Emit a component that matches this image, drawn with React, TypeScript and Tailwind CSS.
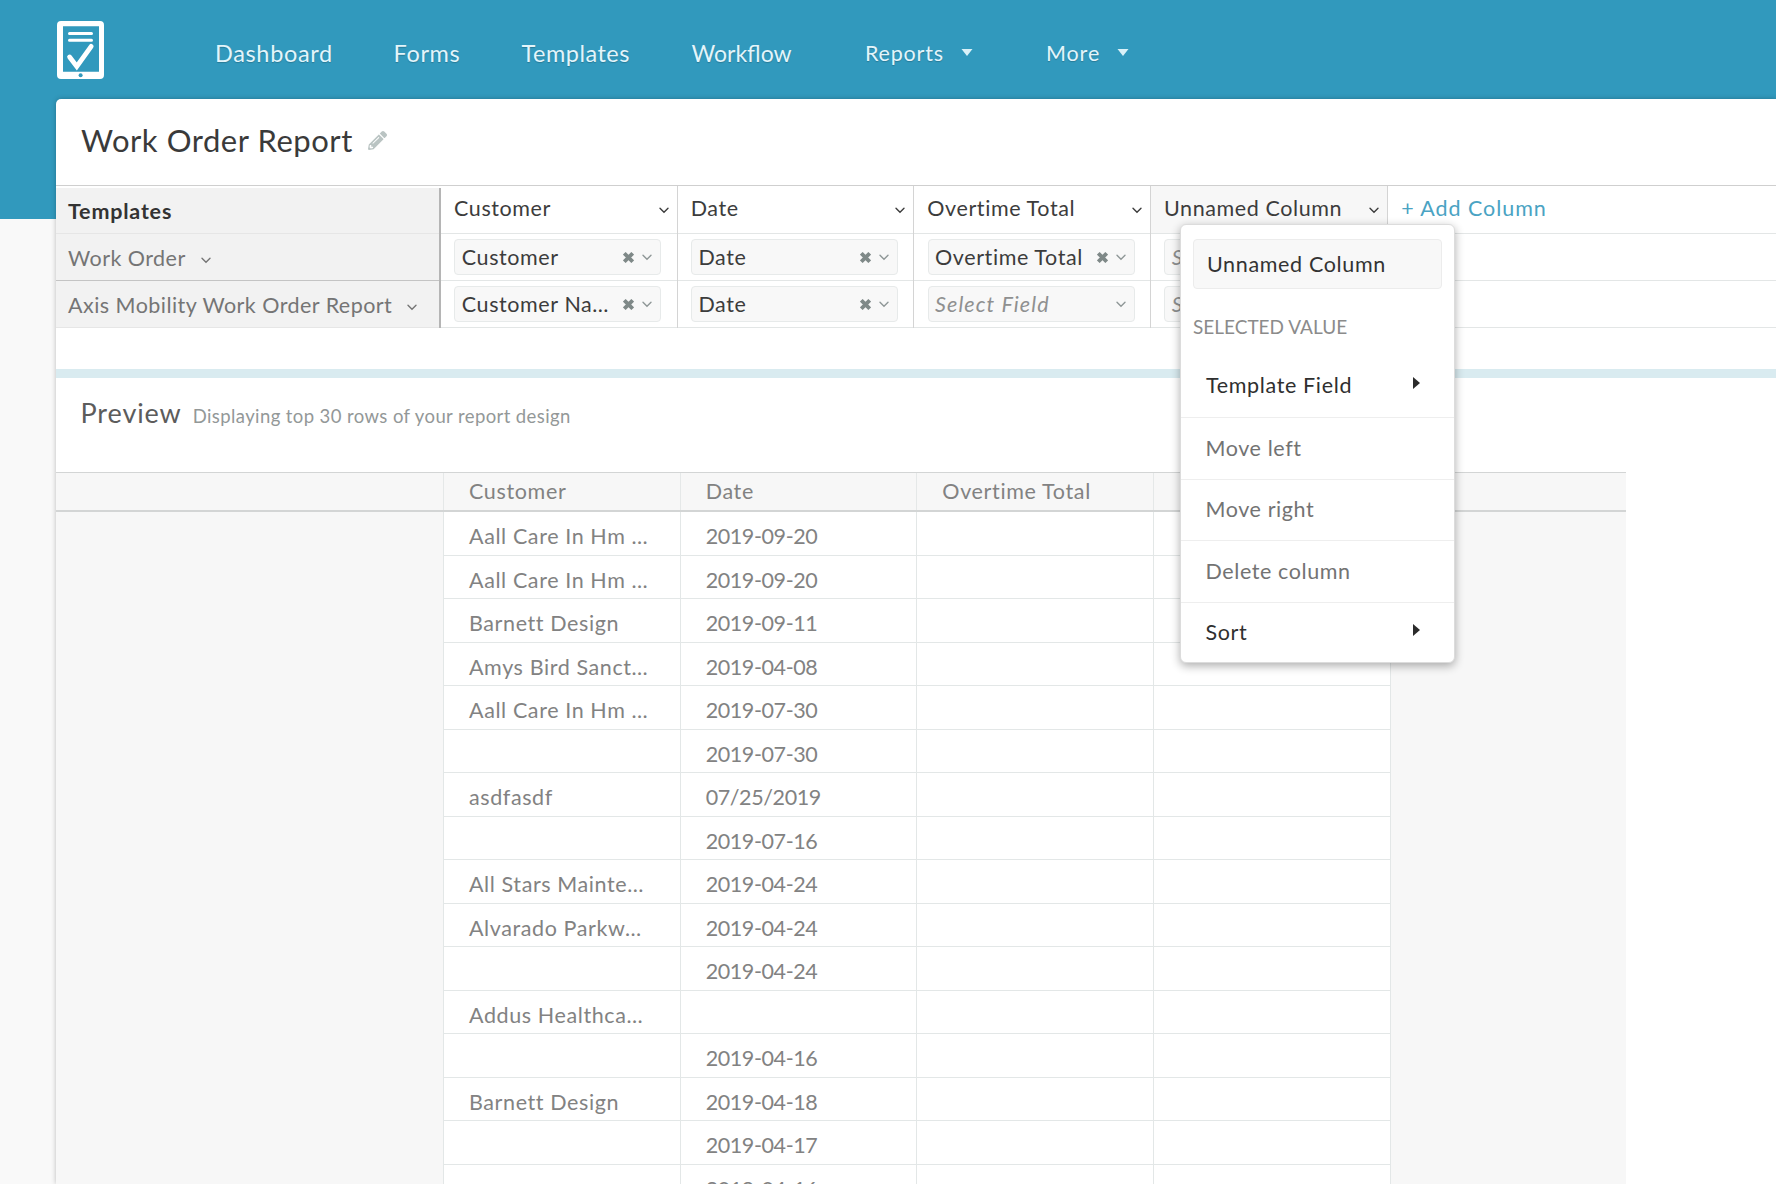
import clsx from "clsx";
import { FaPencilAlt } from "react-icons/fa";

type NavItem = { label: string; className: string; dropdown?: boolean };

const navItems: NavItem[] = [
  { label: "Dashboard", className: "w-[178.5px] text-[23.5px] tracking-[0.65px]" },
  { label: "Forms", className: "w-[128px] text-[23.5px] tracking-[0.65px]" },
  { label: "Templates", className: "w-[170px] text-[23.5px] tracking-[0.5px]" },
  { label: "Workflow", className: "w-[173.5px] text-[23px]" },
  {
    label: "Reports",
    className: "w-[181px] gap-[17px] text-[21.5px] tracking-[0.8px]",
    dropdown: true,
  },
  {
    label: "More",
    className: "gap-[17px] text-[21.5px] tracking-[0.9px]",
    dropdown: true,
  },
];

const templates = [
  { name: "Work Order", border: "h-[47px] border-[#c4c4c4]" },
  { name: "Axis Mobility Work Order Report", border: "h-[47px] border-[#e6e6e6]" },
];

const columns = [
  { name: "Customer", fields: ["Customer", "Customer Na…"] },
  { name: "Date", fields: ["Date", "Date"] },
  { name: "Overtime Total", fields: ["Overtime Total", ""] },
  { name: "Unnamed Column", fields: ["", ""], open: true },
];

const previewRows = [
  ["Aall Care In Hm …", "2019-09-20"],
  ["Aall Care In Hm …", "2019-09-20"],
  ["Barnett Design", "2019-09-11"],
  ["Amys Bird Sanct…", "2019-04-08"],
  ["Aall Care In Hm …", "2019-07-30"],
  ["", "2019-07-30"],
  ["asdfasdf", "07/25/2019"],
  ["", "2019-07-16"],
  ["All Stars Mainte…", "2019-04-24"],
  ["Alvarado Parkw…", "2019-04-24"],
  ["", "2019-04-24"],
  ["Addus Healthca…", ""],
  ["", "2019-04-16"],
  ["Barnett Design", "2019-04-18"],
  ["", "2019-04-17"],
  ["", "2019-04-16"],
];

const Logo = () => (
  <svg width="47" height="58" viewBox="0 0 47 58" fill="none">
    <path
      fill="#fff"
      fillRule="evenodd"
      d="M4 0h39a4 4 0 0 1 4 4v50a4 4 0 0 1-4 4H4a4 4 0 0 1-4-4V4a4 4 0 0 1 4-4ZM6 5.3v45.4h36V5.3Z"
    />
    <path
      d="M12.5 12.6h22M12.5 19.3h22"
      stroke="#fff"
      strokeWidth="3"
      strokeLinecap="round"
    />
    <path
      d="m12.6 36 7.2 9.4 14.4-20"
      stroke="#fff"
      strokeWidth="4.8"
      strokeLinecap="round"
    />
    <circle cx="23.6" cy="54.3" r="2" fill="#3199bd" />
  </svg>
);

const Caret = () => (
  <svg width="12" height="7" viewBox="0 0 12 7" fill="#d9f1f8">
    <path d="M.5 0h11L6 7Z" />
  </svg>
);

const Chevron = ({ className }: { className?: string }) => (
  <svg
    width="10"
    height="7"
    viewBox="0 0 10 7"
    fill="none"
    stroke="currentColor"
    strokeWidth="1.4"
    className={clsx("shrink-0", className)}
  >
    <path d="m1 1.2 4 4 4-4" strokeLinecap="round" />
  </svg>
);

const Cross = () => (
  <svg
    width="11"
    height="11"
    viewBox="0 0 11 11"
    stroke="#7f8988"
    strokeWidth="3.8"
    className="shrink-0"
  >
    <path d="m1.3 1.3 8.4 8.4M9.7 1.3 1.3 9.7" />
  </svg>
);

const Arrow = () => (
  <svg width="7" height="12" viewBox="0 0 7 12" fill="#2b2b2b" className="mb-1">
    <path d="M0 0v12l7-6Z" />
  </svg>
);

const FieldSelect = ({ value }: { value: string }) => (
  <div className="flex h-[36px] w-[207px] items-center rounded border border-[#e7eaea] bg-[#f8f8f8] pr-2 pl-[6.5px]">
    <span
      className={clsx(
        "flex-1 pb-px",
        value
          ? "tracking-[0.6px] text-[#3c3c3c]"
          : "text-[#8f9090] italic tracking-[1.1px]",
      )}
    >
      {value || "Select Field"}
    </span>
    {value && <Cross />}
    <Chevron className="ml-2 text-[#8f9797]" />
  </div>
);

const MenuItem = ({ label, submenu }: { label: string; submenu?: boolean }) => (
  <div
    className={clsx(
      "flex h-[61.5px] items-center justify-between border-t border-[#eeeeee] pr-[34px] pb-px pl-[24.5px] tracking-[0.6px]",
      submenu ? "text-[#2f2f2f]" : "text-[#737373]",
    )}
  >
    {label}
    {submenu && <Arrow />}
  </div>
);

const ColumnMenu = () => (
  <div className="absolute top-[38px] left-[29px] z-10 h-[439px] w-[275px] rounded-md border border-[#dcdcdc] bg-white shadow-[0_3px_10px_rgba(0,0,0,0.32)]">
    <div className="mx-3 mt-[14px] flex h-[50px] items-center rounded border border-[#ececec] bg-[#f8f8f8] pb-px pl-[13px] tracking-[0.65px] text-[#333]">
      Unnamed Column
    </div>
    <div className="mt-[26px] mb-[16px] pl-3 text-[19px] leading-[24px] text-[#8b8b8b]">
      SELECTED VALUE
    </div>
    <div>
      <div className="flex h-[62px] items-center justify-between pr-[34px] pb-[3px] pl-[25px] tracking-[0.65px] text-[#2f2f2f]">
        Template Field
        <Arrow />
      </div>
      <MenuItem label="Move left" />
      <MenuItem label="Move right" />
      <MenuItem label="Delete column" />
      <MenuItem label="Sort" submenu />
    </div>
  </div>
);

const Designer = () => (
  <div className="flex">
    <div className="mt-[2px] w-[385px] shrink-0 border-r-2 border-[#b5b5b5] bg-[#f2f2f2]">
      <div className="flex h-[46px] items-center border-b border-[#e6e6e6] pt-px pl-3 font-bold tracking-[0.8px] text-[#333]">
        Templates
      </div>
      {templates.map((template) => (
        <div
          key={template.name}
          className={clsx(
            "flex items-center border-b pt-[2px] pl-3 tracking-[0.46px] text-[#757575]",
            template.border,
          )}
        >
          {template.name}
          <Chevron className="mt-1 ml-[15px]" />
        </div>
      ))}
    </div>
    {columns.map((column) => (
      <div
        key={column.name}
        className={clsx(
          "relative w-[236.67px] shrink-0",
          !column.open && "border-r border-[#d4d4d4]",
        )}
      >
        <div
          className={clsx(
            "flex h-[48px] items-center justify-between border-b border-[#e3e6e6] pr-2 pb-[3px] pl-[13px] tracking-[0.6px] text-[#3c3c3c]",
            column.open && "border-r border-r-[#d4d4d4] bg-[#f7f7f7]",
          )}
        >
          {column.name}
          <Chevron className="mt-1" />
        </div>
        {column.fields.map((field, index) => (
          <div
            key={index}
            className="flex h-[47px] items-center border-b border-[#e3e6e6] pl-[13.25px]"
          >
            <FieldSelect value={field} />
          </div>
        ))}
        {column.open && <ColumnMenu />}
      </div>
    ))}
    <div className="flex-1">
      <div className="flex h-[48px] items-center border-b border-[#e3e6e6] pb-[3px] pl-[13.5px] tracking-[0.95px] text-[#4aa3c3]">
        + Add Column
      </div>
      <div className="h-[47px] border-b border-[#e3e6e6]" />
      <div className="h-[47px] border-b border-[#e3e6e6]" />
    </div>
  </div>
);

const Preview = () => (
  <div className="w-[1570px] bg-[#f7f7f7] text-[#828282]">
    <div className="flex h-[40px] border-t border-b-2 border-[#d3d5d5] pl-[387px]">
      {["Customer", "Date", "Overtime Total", ""].map((name) => (
        <div
          key={name}
          className="flex w-[236.67px] items-center border-l border-[#e5e8e8] pb-[2px] pl-[25px] tracking-[0.65px]"
        >
          {name}
        </div>
      ))}
    </div>
    <div className="ml-[387px] w-[947.67px] border-r border-[#e3e7e7]">
      {previewRows.map(([customer, date], index) => (
        <div key={index} className="flex h-[43.5px] bg-white">
          {[customer, date, "", ""].map((value, cell) => (
            <div
              key={cell}
              className={clsx(
                "flex w-[236.67px] items-center border-b border-l border-[#e3e7e7] pt-[6px] pl-[25px]",
                cell === 1 ? "tracking-[-0.4px]" : "tracking-[0.6px]",
              )}
            >
              {value}
            </div>
          ))}
        </div>
      ))}
    </div>
  </div>
);

const App = () => {
  return (
    <div className="h-[1184px] w-full overflow-hidden bg-[#f9f9f9] font-['Lato',sans-serif] text-[21.5px] leading-[26px] whitespace-nowrap">
      <header className="flex h-[219px] items-start bg-[#3199bd] pl-[57px]">
        <div className="mt-[20.5px] w-[158px]">
          <Logo />
        </div>
        <nav className="mt-[39.5px] flex text-[#e3f5fb] [text-shadow:0_1px_1px_rgba(0,0,0,0.2)]">
          {navItems.map((item) => (
            <a
              key={item.label}
              className={clsx("flex items-center", item.className)}
            >
              {item.label}
              {item.dropdown && <Caret />}
            </a>
          ))}
        </nav>
      </header>
      <main className="relative -mt-[120px] ml-[56px] h-[1085px] rounded-tl-[5px] bg-white shadow-[0_0_5px_rgba(0,0,0,0.25)]">
        <div className="flex h-[87px] items-center border-b border-[#cfcfcf] pb-[4px] pl-[25px]">
          <h1 className="text-[31px] tracking-[0.55px] text-[#3a3a3a]">
            Work Order Report
          </h1>
          <FaPencilAlt size={19} className="ml-[15px] text-[#bac4c3]" />
        </div>
        <Designer />
        <div className="mt-[41px] h-[9px] bg-[#d9ebf0]" />
        <div className="flex h-[94px] items-baseline gap-[11px] pt-[22px] pl-[24.5px]">
          <h2 className="text-[27px] tracking-[0.9px] text-[#5c5c5c]">Preview</h2>
          <span className="text-[18.5px] tracking-[0.4px] text-[#939898]">
            Displaying top 30 rows of your report design
          </span>
        </div>
        <Preview />
      </main>
    </div>
  );
};

export default App;
